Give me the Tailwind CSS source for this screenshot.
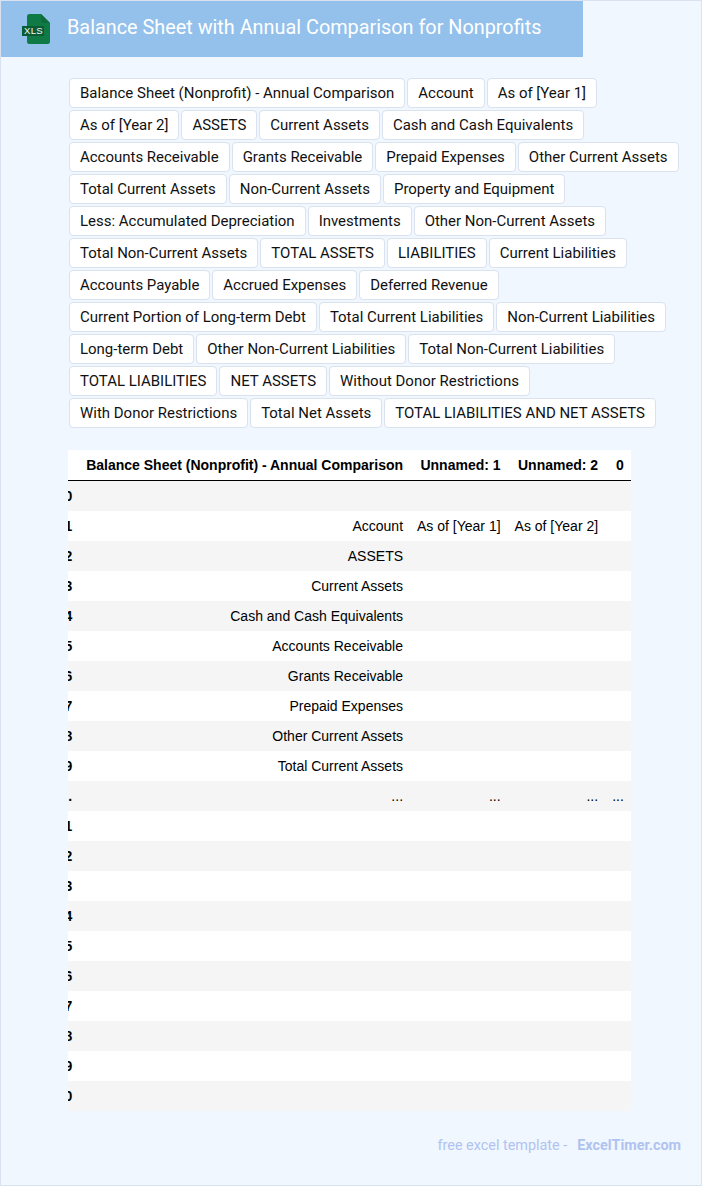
<!DOCTYPE html>
<html lang="en">
<head>
	<meta charset="utf-8"/>
	<title>Balance Sheet with Annual Comparison for Nonprofits</title>
	<script src="https://cdn.jsdelivr.net/npm/@tailwindcss/browser@4"></script>
</head>
<body class="bg-[#f0f7ff] font-['Roboto',sans-serif]">
<div class="h-[1186px] border border-[#d9e2ee] overflow-hidden">
	<header class="w-[582px] h-[56px] bg-[#93c1ec] flex items-center">
		<svg class="ml-[21px] w-[29px] h-[30px] shrink-0" viewBox="0 0 29 30">
			<path d="M5 2.500a2.500 2.500 0 0 1 2.500-2.500H19l9 9v18.500a2.500 2.500 0 0 1-2.500 2.500H7.500A2.500 2.500 0 0 1 5 27.500z" fill="#0f7a45"/>
			<path d="M19 0l9 9h-6.500A2.500 2.500 0 0 1 19 6.500z" fill="#0d6b3c"/>
			<rect x="0" y="12" width="22" height="10" fill="#0b5c34"/>
			<text x="11.500" y="20.400" text-anchor="middle" font-size="9.500" fill="#f2f8f4" font-family="Liberation Sans, sans-serif" letter-spacing="0.300">XLS</text>
		</svg>
		<h1 class="ml-[16px] mb-[2px] text-white text-[19.840px] whitespace-nowrap">Balance Sheet with Annual Comparison for Nonprofits</h1>
	</header>
	<main class="pl-[67px]">
		<ul class="mt-[21px] ml-[1px] flex flex-wrap gap-[2px] w-[620px] text-[14.985px] text-[#111]">
			<li class="h-[30px] px-[10px] flex items-center bg-white border border-[#d9e2ee] rounded">Balance Sheet (Nonprofit) - Annual Comparison</li>
			<li class="h-[30px] px-[10px] flex items-center bg-white border border-[#d9e2ee] rounded">Account</li>
			<li class="h-[30px] px-[10px] flex items-center bg-white border border-[#d9e2ee] rounded">As of [Year 1]</li>
			<li class="h-[30px] px-[10px] flex items-center bg-white border border-[#d9e2ee] rounded">As of [Year 2]</li>
			<li class="h-[30px] px-[10px] flex items-center bg-white border border-[#d9e2ee] rounded">ASSETS</li>
			<li class="h-[30px] px-[10px] flex items-center bg-white border border-[#d9e2ee] rounded">Current Assets</li>
			<li class="h-[30px] px-[10px] flex items-center bg-white border border-[#d9e2ee] rounded">Cash and Cash Equivalents</li>
			<li class="h-[30px] px-[10px] flex items-center bg-white border border-[#d9e2ee] rounded">Accounts Receivable</li>
			<li class="h-[30px] px-[10px] flex items-center bg-white border border-[#d9e2ee] rounded">Grants Receivable</li>
			<li class="h-[30px] px-[10px] flex items-center bg-white border border-[#d9e2ee] rounded">Prepaid Expenses</li>
			<li class="h-[30px] px-[10px] flex items-center bg-white border border-[#d9e2ee] rounded">Other Current Assets</li>
			<li class="h-[30px] px-[10px] flex items-center bg-white border border-[#d9e2ee] rounded">Total Current Assets</li>
			<li class="h-[30px] px-[10px] flex items-center bg-white border border-[#d9e2ee] rounded">Non-Current Assets</li>
			<li class="h-[30px] px-[10px] flex items-center bg-white border border-[#d9e2ee] rounded">Property and Equipment</li>
			<li class="h-[30px] px-[10px] flex items-center bg-white border border-[#d9e2ee] rounded">Less: Accumulated Depreciation</li>
			<li class="h-[30px] px-[10px] flex items-center bg-white border border-[#d9e2ee] rounded">Investments</li>
			<li class="h-[30px] px-[10px] flex items-center bg-white border border-[#d9e2ee] rounded">Other Non-Current Assets</li>
			<li class="h-[30px] px-[10px] flex items-center bg-white border border-[#d9e2ee] rounded">Total Non-Current Assets</li>
			<li class="h-[30px] px-[10px] flex items-center bg-white border border-[#d9e2ee] rounded">TOTAL ASSETS</li>
			<li class="h-[30px] px-[10px] flex items-center bg-white border border-[#d9e2ee] rounded">LIABILITIES</li>
			<li class="h-[30px] px-[10px] flex items-center bg-white border border-[#d9e2ee] rounded">Current Liabilities</li>
			<li class="h-[30px] px-[10px] flex items-center bg-white border border-[#d9e2ee] rounded">Accounts Payable</li>
			<li class="h-[30px] px-[10px] flex items-center bg-white border border-[#d9e2ee] rounded">Accrued Expenses</li>
			<li class="h-[30px] px-[10px] flex items-center bg-white border border-[#d9e2ee] rounded">Deferred Revenue</li>
			<li class="h-[30px] px-[10px] flex items-center bg-white border border-[#d9e2ee] rounded">Current Portion of Long-term Debt</li>
			<li class="h-[30px] px-[10px] flex items-center bg-white border border-[#d9e2ee] rounded">Total Current Liabilities</li>
			<li class="h-[30px] px-[10px] flex items-center bg-white border border-[#d9e2ee] rounded">Non-Current Liabilities</li>
			<li class="h-[30px] px-[10px] flex items-center bg-white border border-[#d9e2ee] rounded">Long-term Debt</li>
			<li class="h-[30px] px-[10px] flex items-center bg-white border border-[#d9e2ee] rounded">Other Non-Current Liabilities</li>
			<li class="h-[30px] px-[10px] flex items-center bg-white border border-[#d9e2ee] rounded">Total Non-Current Liabilities</li>
			<li class="h-[30px] px-[10px] flex items-center bg-white border border-[#d9e2ee] rounded">TOTAL LIABILITIES</li>
			<li class="h-[30px] px-[10px] flex items-center bg-white border border-[#d9e2ee] rounded">NET ASSETS</li>
			<li class="h-[30px] px-[10px] flex items-center bg-white border border-[#d9e2ee] rounded">Without Donor Restrictions</li>
			<li class="h-[30px] px-[10px] flex items-center bg-white border border-[#d9e2ee] rounded">With Donor Restrictions</li>
			<li class="h-[30px] px-[10px] flex items-center bg-white border border-[#d9e2ee] rounded">Total Net Assets</li>
			<li class="h-[30px] px-[10px] flex items-center bg-white border border-[#d9e2ee] rounded">TOTAL LIABILITIES AND NET ASSETS</li>
		</ul>
		<div class="mt-[22px] w-[563px] overflow-hidden">
			<table class="ml-[-18.400px] border-separate border-spacing-0 font-['Liberation_Sans',sans-serif] text-[14px] text-black text-right whitespace-nowrap bg-white">
				<thead>
					<tr class="h-[31px] font-bold">
						<th class="px-[7px] border-b border-black"></th>
						<th class="px-[7px] border-b border-black">Balance Sheet (Nonprofit) - Annual Comparison</th>
						<th class="px-[7px] border-b border-black">Unnamed: 1</th>
						<th class="px-[7px] border-b border-black">Unnamed: 2</th>
						<th class="px-[7px] border-b border-black">0</th>
					</tr>
				</thead>
				<tbody>
					<tr class="h-[30px] bg-[#f5f5f5]"><th class="px-[7px]">0</th><td class="px-[7px]"></td><td class="px-[7px]"></td><td class="px-[7px]"></td><td class="px-[7px]"></td></tr>
					<tr class="h-[30px]"><th class="px-[7px]">1</th><td class="px-[7px]">Account</td><td class="px-[7px]">As of [Year 1]</td><td class="px-[7px]">As of [Year 2]</td><td class="px-[7px]"></td></tr>
					<tr class="h-[30px] bg-[#f5f5f5]"><th class="px-[7px]">2</th><td class="px-[7px]">ASSETS</td><td class="px-[7px]"></td><td class="px-[7px]"></td><td class="px-[7px]"></td></tr>
					<tr class="h-[30px]"><th class="px-[7px]">3</th><td class="px-[7px]">Current Assets</td><td class="px-[7px]"></td><td class="px-[7px]"></td><td class="px-[7px]"></td></tr>
					<tr class="h-[30px] bg-[#f5f5f5]"><th class="px-[7px]">4</th><td class="px-[7px]">Cash and Cash Equivalents</td><td class="px-[7px]"></td><td class="px-[7px]"></td><td class="px-[7px]"></td></tr>
					<tr class="h-[30px]"><th class="px-[7px]">5</th><td class="px-[7px]">Accounts Receivable</td><td class="px-[7px]"></td><td class="px-[7px]"></td><td class="px-[7px]"></td></tr>
					<tr class="h-[30px] bg-[#f5f5f5]"><th class="px-[7px]">6</th><td class="px-[7px]">Grants Receivable</td><td class="px-[7px]"></td><td class="px-[7px]"></td><td class="px-[7px]"></td></tr>
					<tr class="h-[30px]"><th class="px-[7px]">7</th><td class="px-[7px]">Prepaid Expenses</td><td class="px-[7px]"></td><td class="px-[7px]"></td><td class="px-[7px]"></td></tr>
					<tr class="h-[30px] bg-[#f5f5f5]"><th class="px-[7px]">8</th><td class="px-[7px]">Other Current Assets</td><td class="px-[7px]"></td><td class="px-[7px]"></td><td class="px-[7px]"></td></tr>
					<tr class="h-[30px]"><th class="px-[7px]">9</th><td class="px-[7px]">Total Current Assets</td><td class="px-[7px]"></td><td class="px-[7px]"></td><td class="px-[7px]"></td></tr>
					<tr class="h-[30px] bg-[#f5f5f5]"><th class="px-[7px]">...</th><td class="px-[7px]">...</td><td class="px-[7px]">...</td><td class="px-[7px]">...</td><td class="px-[7px]">...</td></tr>
					<tr class="h-[30px]"><th class="px-[7px]">21</th><td class="px-[7px]"></td><td class="px-[7px]"></td><td class="px-[7px]"></td><td class="px-[7px]"></td></tr>
					<tr class="h-[30px] bg-[#f5f5f5]"><th class="px-[7px]">22</th><td class="px-[7px]"></td><td class="px-[7px]"></td><td class="px-[7px]"></td><td class="px-[7px]"></td></tr>
					<tr class="h-[30px]"><th class="px-[7px]">23</th><td class="px-[7px]"></td><td class="px-[7px]"></td><td class="px-[7px]"></td><td class="px-[7px]"></td></tr>
					<tr class="h-[30px] bg-[#f5f5f5]"><th class="px-[7px]">24</th><td class="px-[7px]"></td><td class="px-[7px]"></td><td class="px-[7px]"></td><td class="px-[7px]"></td></tr>
					<tr class="h-[30px]"><th class="px-[7px]">25</th><td class="px-[7px]"></td><td class="px-[7px]"></td><td class="px-[7px]"></td><td class="px-[7px]"></td></tr>
					<tr class="h-[30px] bg-[#f5f5f5]"><th class="px-[7px]">26</th><td class="px-[7px]"></td><td class="px-[7px]"></td><td class="px-[7px]"></td><td class="px-[7px]"></td></tr>
					<tr class="h-[30px]"><th class="px-[7px]">27</th><td class="px-[7px]"></td><td class="px-[7px]"></td><td class="px-[7px]"></td><td class="px-[7px]"></td></tr>
					<tr class="h-[30px] bg-[#f5f5f5]"><th class="px-[7px]">28</th><td class="px-[7px]"></td><td class="px-[7px]"></td><td class="px-[7px]"></td><td class="px-[7px]"></td></tr>
					<tr class="h-[30px]"><th class="px-[7px]">29</th><td class="px-[7px]"></td><td class="px-[7px]"></td><td class="px-[7px]"></td><td class="px-[7px]"></td></tr>
					<tr class="h-[30px] bg-[#f5f5f5]"><th class="px-[7px]">30</th><td class="px-[7px]"></td><td class="px-[7px]"></td><td class="px-[7px]"></td><td class="px-[7px]"></td></tr>
				</tbody>
			</table>
		</div>
	</main>
	<footer class="mt-[25px] pr-[20px] flex justify-end gap-[10px] text-[14.400px] leading-[20px] text-[#b0c3f0]">
		<span>free excel template -</span>
		<span class="font-bold">ExcelTimer.com</span>
	</footer>
</div>
</body>
</html>
